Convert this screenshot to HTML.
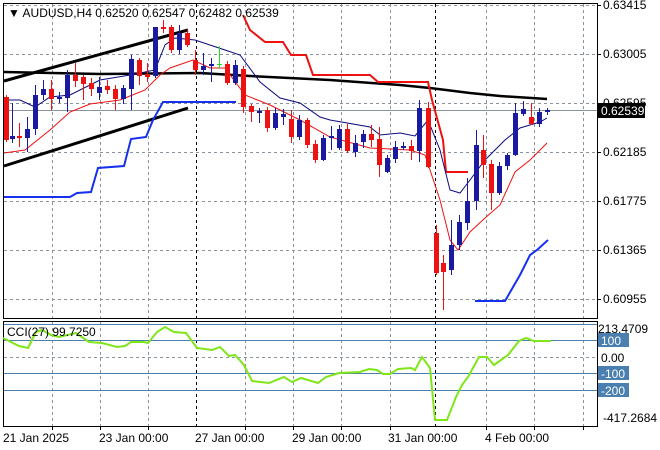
<!DOCTYPE html>
<html><head><style>
body{margin:0;background:#fff;width:660px;height:450px;overflow:hidden}
svg{display:block;font-family:"Liberation Sans",sans-serif}
</style></head><body>
<svg id="s" width="660" height="450" xmlns="http://www.w3.org/2000/svg">
<rect width="660" height="450" fill="#fff"/>
<g id="grid" stroke="#8a949c" stroke-dasharray="3,3" stroke-width="1"></g>
<line x1="4" y1="110.5" x2="597" y2="110.5" stroke="#8a949c"/>
<line x1="196.5" y1="4" x2="196.5" y2="318" stroke="#000" stroke-dasharray="3,3"/>
<line x1="435.5" y1="4" x2="435.5" y2="318" stroke="#000" stroke-dasharray="3,3"/>
<line x1="196.5" y1="322" x2="196.5" y2="426" stroke="#000" stroke-dasharray="3,3"/>
<line x1="435.5" y1="322" x2="435.5" y2="426" stroke="#000" stroke-dasharray="3,3"/>
<!-- channel -->
<line x1="4" y1="81" x2="188" y2="30" stroke="#000" stroke-width="3"/>
<line x1="4" y1="166" x2="188" y2="108" stroke="#000" stroke-width="3"/>
<polyline fill="none" stroke="#000" stroke-width="2.5" points="4,72 100,74 200,73 250,76 330,80 400,85 430,88 470,93 500,96 547,99"/>
<polyline fill="none" stroke="#ee1111" stroke-width="2" points="243,15 250,30 265,42 283,42 291,55 306,55 313,75 370,75 378,82 428,82 432,100 443,140 446,172 468,172"/>
<polyline fill="none" stroke="#1530ee" stroke-width="2" points="4,197 70,197 77,193 91,192 98,168 124,166 131,139 146,137 153,120 163,102 236,102"/>
<polyline fill="none" stroke="#1530ee" stroke-width="2" points="475,301 505,301 520,275 530,255 537,250 548,240"/>
<polyline fill="none" stroke="#0a0a80" stroke-width="1" points="4,100 20,100 35,107 50,97 70,95 100,80 130,75 155,70 165,45 175,38 195,40 225,50 240,55 260,82 280,98 300,103 320,117 330,120 370,127 380,135 400,133 415,136 428,120 440,150 450,190 460,193 470,180 485,160 505,140 520,128 540,122 547,118"/>
<polyline fill="none" stroke="#ee1111" stroke-width="1" points="4,153 25,150 50,130 70,112 90,104 120,100 145,90 160,75 170,68 193,60 210,68 225,68 245,95 270,105 300,120 330,137 370,148 410,150 425,155 440,200 450,240 458,250 470,232 485,218 500,205 515,172 530,160 547,143"/>
<g id="c"></g>
<!-- frames -->
<rect x="3.5" y="3.5" width="594" height="315" fill="none" stroke="#000"/>
<rect x="3.5" y="321.5" width="594" height="105" fill="none" stroke="#000"/>
<g id="lab" font-size="12" fill="#000"></g>
<text x="8" y="17" font-size="12">▼ AUDUSD,H4  0.62520 0.62547 0.62482 0.62539</text>
<rect x="598" y="103" width="47" height="15" fill="#000"/>
<text x="601" y="115" font-size="12" fill="#fff">0.62539</text>
<!-- CCI -->
<g stroke="#4a7fb0"><line x1="4" y1="324.5" x2="597" y2="324.5"/><line x1="4" y1="340.5" x2="597" y2="340.5"/><line x1="4" y1="373.5" x2="597" y2="373.5"/><line x1="4" y1="390.5" x2="597" y2="390.5"/></g>
<line x1="4" y1="357.5" x2="597" y2="357.5" stroke="#8a949c" stroke-dasharray="3,3"/>
<polyline fill="none" stroke="#7fe61a" stroke-width="2" points="3,338 19,346 28,348 36,332 42,330 51,335 59,337 76,333 89,342 102,343 117,347 125,346 131,342 144,342 148,343 157,332 165,327 174,332 186,333 197,348 212,350 220,347 229,356 235,355 244,365 252,381 269,383 284,377 292,382 301,378 318,383 326,377 339,373 360,372 369,369 377,370 383,374 390,374 398,369 411,368 415,370 422,357 430,368 435,420 447,420 456,397 462,385 468,377 479,357 487,357 494,365 508,355 519,341 526,338 534,341 551,341"/>
<text x="7" y="336" font-size="12">CCI(27) 99.7250</text>
<rect x="598" y="333" width="31" height="14" fill="#4a7fb0"/>
<rect x="598" y="366" width="31" height="14" fill="#4a7fb0"/>
<rect x="598" y="383" width="31" height="14" fill="#4a7fb0"/>
<g font-size="12"><text x="598" y="333">213.4709</text><text x="601" y="345" fill="#fff">100</text><text x="601" y="362">0.00</text><text x="601" y="378" fill="#fff">-100</text><text x="601" y="395" fill="#fff">-200</text><text x="603" y="422">-417.2684</text></g>
<g font-size="12"><text x="3" y="442">21 Jan 2025</text><text x="99" y="442">23 Jan 00:00</text><text x="195" y="442">27 Jan 00:00</text><text x="292" y="442">29 Jan 00:00</text><text x="388" y="442">31 Jan 00:00</text><text x="485" y="442">4 Feb 00:00</text></g>
</svg>
<script>
var NS="http://www.w3.org/2000/svg";
function el(p,t,a){var e=document.createElementNS(NS,t);for(var k in a)e.setAttribute(k,a[k]);p.appendChild(e);return e;}
var g=document.getElementById('grid');
[5,54,103,152,201,250,299].forEach(function(y){el(g,'line',{x1:4,y1:y+.5,x2:597,y2:y+.5});el(g,'line',{x1:597,y1:y+.5,x2:601,y2:y+.5,'stroke-dasharray':'none',stroke:'#000'});});
[52,100,148,245,293,341,390,486,534,583].forEach(function(x){el(g,'line',{x1:x+.5,y1:4,x2:x+.5,y2:318});el(g,'line',{x1:x+.5,y1:322,x2:x+.5,y2:426});el(g,'line',{x1:x+.5,y1:426,x2:x+.5,y2:430,'stroke-dasharray':'none',stroke:'#000'});});
var lab=document.getElementById('lab');
[["0.63415",5],["0.63005",54],["0.62595",103],["0.62185",152],["0.61775",201],["0.61365",250],["0.60955",299]].forEach(function(a){var t=el(lab,'text',{x:603,y:a[1]+4});t.textContent=a[0];});
// x, type(b/r/g), bodyTop, bodyBot, wickTop, wickBot
var C=[[6,'r',97,140,95,142],[12,'b',136,139,103,143],[19,'r',136,138,123,147],[27,'b',129,138,117,152],[35,'b',95,129,85,135],[43,'b',89,95,80,100],[51,'r',89,99,80,110],[59,'b',97,99,92,103],[67,'b',75,98,70,112],[75,'r',75,81,63,87],[83,'r',77,84,75,100],[91,'r',83,89,78,96],[99,'b',87,93,77,100],[107,'r',86,90,80,94],[115,'r',89,99,85,110],[123,'b',88,99,85,104],[131,'b',59,89,55,110],[139,'r',60,76,58,85],[147,'r',74,77,63,82],[155,'b',27,76,27,78],[163,'r',27,29,20,33],[171,'r',27,50,25,53],[179,'b',33,50,25,54],[187,'r',33,45,30,47],[195,'r',60,70,50,75],[203,'b',66,70,53,75],[211,'b',64,66,58,82],[219,'g',64,65,46,69],[227,'r',64,83,61,85],[235,'b',65,83,60,85],[243,'r',69,107,66,113],[251,'r',106,112,104,122],[259,'b',111,113,108,123],[267,'r',110,128,107,132],[275,'b',113,128,108,130],[283,'b',114,117,109,125],[291,'r',119,137,110,143],[299,'b',120,137,115,140],[307,'r',120,145,118,148],[315,'r',144,160,140,163],[323,'b',138,160,135,161],[331,'b',136,138,126,150],[339,'b',129,148,125,150],[347,'r',129,151,124,153],[355,'b',143,152,135,157],[363,'b',134,142,130,148],[371,'r',134,140,125,147],[379,'r',139,165,127,177],[387,'b',158,172,155,173],[395,'b',147,159,141,163],[403,'b',146,148,142,150],[411,'r',146,151,140,160],[419,'b',108,151,100,162],[428,'r',108,167,102,168],[436,'r',233,273,225,275],[443,'r',263,272,255,310],[451,'b',245,270,220,275],[459,'b',222,245,215,250],[467,'b',201,223,178,230],[476,'b',145,201,130,210],[483,'r',150,165,135,178],[491,'r',164,193,160,210],[499,'b',166,193,162,195],[507,'b',155,166,153,170],[515,'b',113,155,103,156],[523,'b',109,114,101,116],[531,'r',117,124,103,125],[539,'b',112,124,108,127],[547,'b',110,112,108,115]];
var cg=document.getElementById('c');
C.forEach(function(c){var col=c[1]=='b'?'#1a1aa0':c[1]=='r'?'#ee1111':'#22dd22';
el(cg,'line',{x1:c[0]+.5,y1:c[4],x2:c[0]+.5,y2:c[5],stroke:col});
el(cg,'rect',{x:c[0]-2,y:c[2],width:5,height:Math.max(1,c[3]-c[2]),fill:col});});
</script>
</body></html>
